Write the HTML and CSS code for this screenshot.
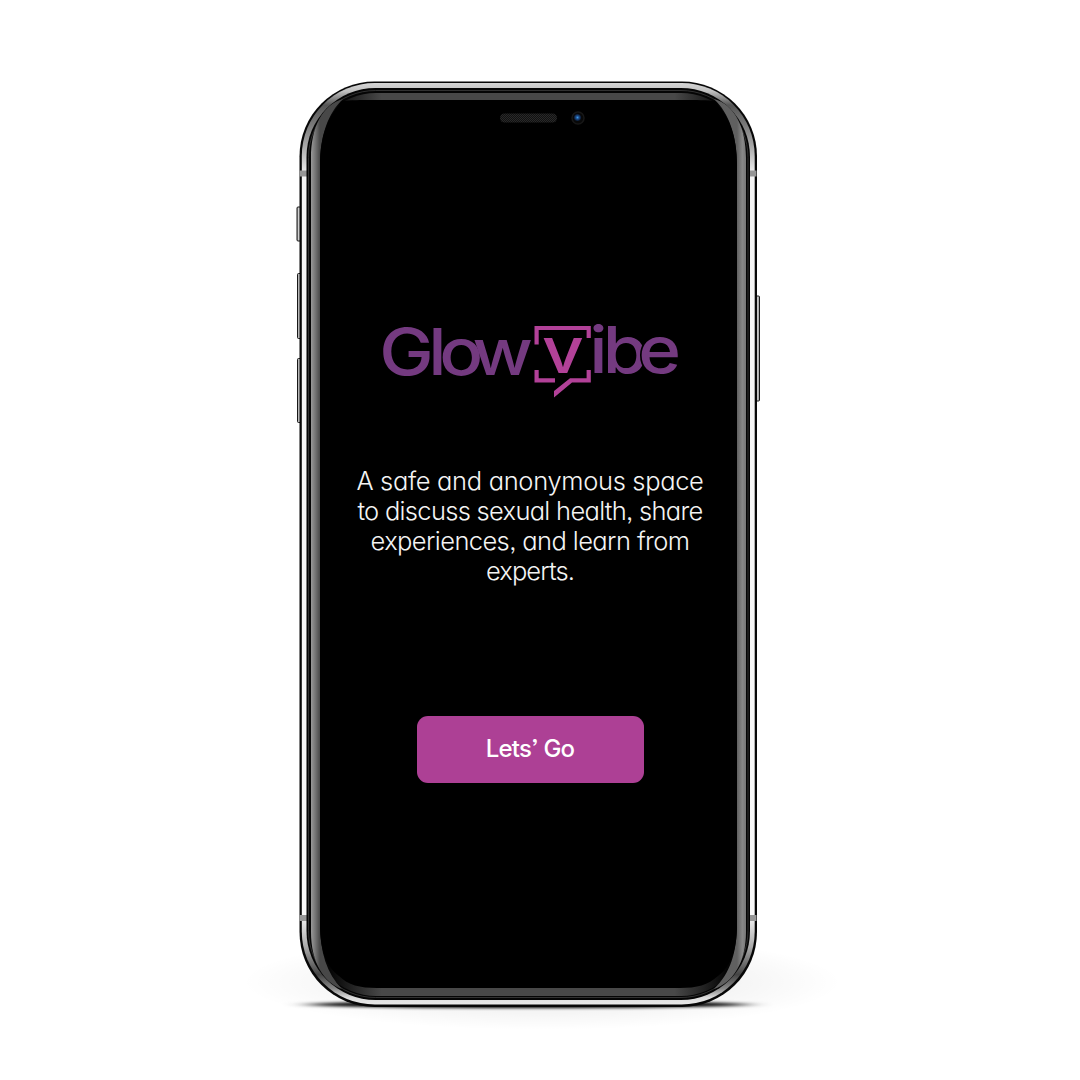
FILE: index.html
```html
<!DOCTYPE html>
<html lang="en">
<head>
<meta charset="utf-8">
<title>GlowVibe</title>
<link rel="stylesheet" href="styles.css">
</head>
<body>
<main class="stage">
  <svg class="device" viewBox="0 0 1080 1080" aria-hidden="true">
    <defs>
      <linearGradient id="button"><stop stop-color="#888"/><stop offset=".35" stop-color="#ddd"/><stop offset="1" stop-color="#999"/></linearGradient>
      <linearGradient id="metal" gradientUnits="userSpaceOnUse" x1="0" y1="82" x2="0" y2="1007">
        <stop stop-color="#d8d8d8"/><stop offset=".01" stop-color="#c0c0c0"/><stop offset=".025" stop-color="#555"/><stop offset=".045" stop-color="#777"/><stop offset=".07" stop-color="#aaa"/><stop offset=".1" stop-color="#f4f4f4"/>
        <stop offset=".9" stop-color="#f8f8f8"/><stop offset=".935" stop-color="#aaa"/><stop offset=".965" stop-color="#444"/><stop offset=".98" stop-color="#888"/><stop offset=".99" stop-color="#ddd"/><stop offset="1" stop-color="#eee"/>
      </linearGradient>
      <linearGradient id="left" gradientUnits="userSpaceOnUse" x1="311" y1="0" x2="320" y2="0"><stop stop-color="#999"/><stop offset=".45" stop-color="#777"/><stop offset="1" stop-color="#484848"/></linearGradient>
      <linearGradient id="right" gradientUnits="userSpaceOnUse" x1="737" y1="0" x2="746" y2="0"><stop stop-color="#606060"/><stop offset=".6" stop-color="#888"/><stop offset="1" stop-color="#777"/></linearGradient>
      <linearGradient id="edge" gradientUnits="userSpaceOnUse" x1="330" y1="0" x2="726" y2="0"><stop stop-color="#050505"/><stop offset=".13" stop-color="#484848"/><stop offset=".87" stop-color="#484848"/><stop offset="1" stop-color="#050505"/></linearGradient>
      <radialGradient id="glow"><stop stop-color="#000" stop-opacity=".13"/><stop offset=".6" stop-color="#000" stop-opacity=".045"/><stop offset="1" stop-color="#000" stop-opacity="0"/></radialGradient>
      <filter id="soft" x="-20%" y="-300%" width="140%" height="700%"><feGaussianBlur stdDeviation="12 1.6"/></filter>
      <radialGradient id="lens"><stop stop-color="#3d9bea"/><stop offset=".45" stop-color="#1d4b88"/><stop offset="1" stop-color="#09152a"/></radialGradient>
      <pattern id="mesh" width="2" height="2" patternUnits="userSpaceOnUse"><rect width="2" height="2" fill="#111"/><rect width="1" height="1" fill="#292929"/><rect x="1" y="1" width="1" height="1" fill="#292929"/></pattern>
    </defs>
    <ellipse cx="542" cy="982" rx="300" ry="48" fill="url(#glow)"/>
    <ellipse cx="528" cy="1004.500" rx="220" ry="3.500" filter="url(#soft)"/>
    <g fill="url(#button)" stroke="#181818">
      <rect x="297" y="207" width="5" height="34" rx="1"/>
      <rect x="297.500" y="273.500" width="5" height="65" rx="1"/>
      <rect x="297.500" y="358.500" width="5" height="64" rx="1"/>
      <rect x="754.500" y="296" width="5" height="105" rx="1"/>
    </g>
    <rect x="299.500" y="81.500" width="457.500" height="925.500" rx="75" fill="#070707"/>
    <rect x="301.800" y="83" width="452.900" height="921.500" rx="73" fill="url(#metal)"/>
    <path d="M299.500 173.500h8M748.500 173.500h8M299.500 918h8M748.500 918h8" stroke="#969696" stroke-width="6"/>
    <rect x="306.500" y="88" width="443.500" height="912" rx="69" fill="#050505"/>
    <rect x="308.500" y="90.500" width="439.500" height="907" rx="67" fill="none" stroke="#3c3c3c" stroke-width=".8"/>
    <rect x="311" y="93" width="435" height="903" rx="65" fill="url(#edge)"/>
    <path d="M311 158C311 127 323 104 343 99C328 113 320 136 320 165V924C320 952 327 974 342 989C324 983 311 962 311 932Z" fill="url(#left)"/>
    <path d="M746 158C746 127 734 104 714 99C729 113 737 136 737 165V924C737 952 730 974 714 989C733 983 746 962 746 932Z" fill="url(#right)"/>
    <path d="M375 100H682C696 100 708 100 715 101C730 117 737 138 737 165V924C737 950 731 966 718 976C708 985 697 988 680 988H377C360 988 348 985 339 976C326 966 320 950 320 924V165C320 138 327 117 342 101C350 100 360 100 375 100Z" fill="#000"/>
    <rect x="500" y="113.500" width="57" height="9" rx="4.500" fill="url(#mesh)"/>
    <circle cx="578" cy="118" r="6" fill="#080808" stroke="#171717" stroke-width="1.500"/>
    <circle cx="577.500" cy="117.500" r="3.600" fill="url(#lens)"/>
  </svg>

  <section class="screen">
    <svg class="logo" viewBox="-10 -16 320 110" role="img" aria-label="GlowVibe">
      <g class="wordmark" transform="scale(1.13 1)">
        <text x="-.6 42.800 52.400 81.800" y="54.500">Glow</text>
        <text x="185.200 197.200" y="53">ib</text>
        <text class="e" x="228.500" y="53">e</text>
        <text class="v" x="143.300" y="53">v</text>
      </g>
      <path class="bubble" d="M156.600 24.500V8H208.700V18M156.600 50V60.300H175"/>
      <path class="tail" d="M206.600 50H210.800V62.400H192L174 77.500V71L190 58.200H206.600Z"/>
    </svg>
    <p class="tagline">
      <span class="l1">A safe and anonymous space</span>
      <span class="l2">to discuss sexual health, share</span>
      <span class="l3">experiences, and learn from</span>
      <span class="l4">experts.</span>
    </p>
    <button class="cta" type="button">Lets’ Go</button>
  </section>
</main>
</body>
</html>
```

FILE: styles.css
```css
* { box-sizing: border-box; }
body { margin: 0; background: #fff; }
.stage { display: grid; width: 1080px; height: 1080px; overflow: hidden; }
.device, .screen { grid-area: 1 / 1; }
.device { width: 1080px; height: 1080px; }
.screen {
  width: 417px;
  height: 888px;
  margin: 100px 0 0 320px;
  padding: 204px 0 0 3px;
  display: flex;
  flex-direction: column;
  align-items: center;
  font-family: Inter, "Open Sans", sans-serif;
  font-feature-settings: "cv11" 1, "ss03" 1;
}
.logo { width: 320px; height: 110px; flex: none; overflow: visible; }
.wordmark { font-size: 64.5px; font-weight: 500; fill: #743a80; }
.wordmark .e { stroke: #000; stroke-width: 3px; paint-order: stroke; }
.wordmark .v { fill: #b24198; }
.bubble { fill: none; stroke: #b24198; stroke-width: 4.2; }
.tail { fill: #b24198; }
.tagline {
  margin: 52px 0 0;
  display: flex;
  flex-direction: column;
  align-items: center;
  color: #f4f4f4;
  font-size: 25.5px;
  font-weight: 300;
  line-height: 30px;
  white-space: nowrap;
}
.l1 { letter-spacing: -0.33px; }
.l2 { letter-spacing: -0.7px; }
.l3 { letter-spacing: -0.6px; }
.l4 { letter-spacing: -0.87px; }
.cta {
  width: 227px;
  height: 67px;
  margin-top: 130px;
  padding: 0 0 2px;
  border: 0;
  border-radius: 11px;
  background: #ad4095;
  color: #fff;
  font: inherit;
  font-size: 24px;
  font-weight: 500;
  letter-spacing: -0.75px;
  font-feature-settings: inherit;
}
```
